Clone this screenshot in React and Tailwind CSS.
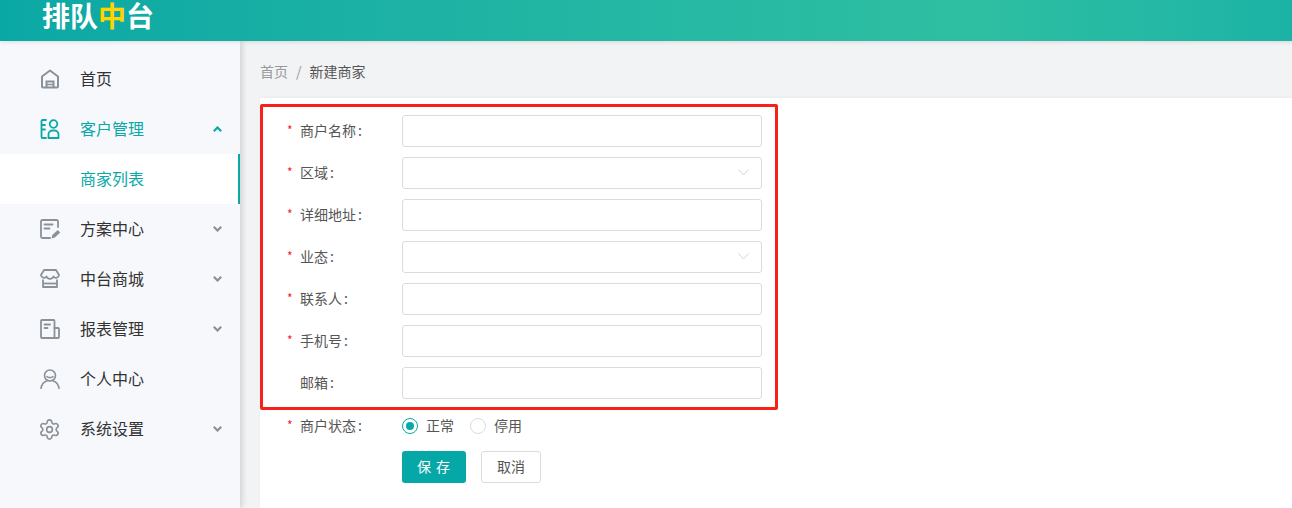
import React from 'react';
import { Settings } from 'lucide-react';

const CJK = { fontFamily: '"Noto Sans CJK SC", "Liberation Sans", sans-serif' };

const HomeIcon = () => (
  <svg width="20" height="20" viewBox="0 0 20 20" fill="none" stroke="#8a9199" strokeWidth="2">
    <path d="M2 7.500 10 1.500l8 6v10a1 1 0 0 1-1 1H3a1 1 0 0 1-1-1z" strokeLinejoin="round" />
    <path d="M6.500 18.500v-6h7v6" />
    <path d="M6.500 15.500h7" strokeWidth="1.500" />
  </svg>
);

const CustomerIcon = () => (
  <svg width="20" height="20" viewBox="0 0 20 20" fill="none" stroke="#0aa9a7" strokeWidth="1.800" strokeLinecap="round">
    <path d="M6 1H2.500a1 1 0 0 0-1 1v16a1 1 0 0 0 1 1H6" />
    <path d="M2 6h3M2 10.500h3" />
    <circle cx="13.500" cy="5" r="3.800" />
    <path d="M8.500 19v-3.500a4 4 0 0 1 4-4h2a4 4 0 0 1 4 4V19z" strokeLinejoin="round" />
  </svg>
);

const PlanIcon = () => (
  <svg width="20" height="20" viewBox="0 0 20 20" fill="none" stroke="#8a9199" strokeWidth="1.800" strokeLinecap="round">
    <path d="M18 8V2.500A1.500 1.500 0 0 0 16.500 1h-14A1.500 1.500 0 0 0 1 2.500v15A1.500 1.500 0 0 0 2.500 19H10" />
    <path d="M4.500 5.500h8M4.500 9.500h5" />
    <path d="m11.500 19.500 .8-3.500 5.500-5 2.500 2.500-5.500 5z" fill="#8a9199" stroke="none" />
  </svg>
);

const ShopIcon = () => (
  <svg width="20" height="20" viewBox="0 0 20 20" fill="none" stroke="#8a9199" strokeWidth="1.800" strokeLinejoin="round">
    <path d="M4 1h12l3 5a3 3 0 0 1-5.500 1.500 3.800 3.800 0 0 1-7 0A3 3 0 0 1 1 6z" />
    <path d="M3 10.500V18h14v-7.500" />
    <path d="M3 14.500h14" />
  </svg>
);

const ReportIcon = () => (
  <svg width="20" height="20" viewBox="0 0 20 20" fill="none" stroke="#8a9199" strokeWidth="1.800" strokeLinecap="round">
    <path d="M14.500 19H2a1 1 0 0 1-1-1V2a1 1 0 0 1 1-1h11.500a1 1 0 0 1 1 1z" />
    <path d="M14.500 9H18a1 1 0 0 1 1 1v8a1 1 0 0 1-1 1h-3.500" />
    <path d="M4.500 5.500h5.500M4.500 9h3" />
  </svg>
);

const UserIcon = () => (
  <svg width="20" height="20" viewBox="0 0 20 20" fill="none" stroke="#8a9199" strokeWidth="1.600" strokeLinecap="round">
    <circle cx="10" cy="6.500" r="5.500" />
    <path d="M7 7.500c1.500 1.500 4.500 1.500 6 0" />
    <path d="M1 19.500c.5-4 3-6.500 5.500-7.500M19 19.500c-.5-4-3-6.500-5.500-7.500" />
  </svg>
);

const GearIcon = () => <Settings size={23} strokeWidth={1.700} className="-ml-[2px] text-[#8a9199]" />;

// small heavy caret beside the submenu rows
const Caret = ({ up, color }) => (
  <svg width="9" height="6" viewBox="0 0 9 6" fill="none" stroke={color} strokeWidth="2.200">
    <path d={up ? 'M.8 5.200 4.500 1.500 8.200 5.200' : 'M.8 .8 4.500 4.500 8.200 .8'} />
  </svg>
);

const MENU = [
  { label: '首页', Icon: HomeIcon },
  { label: '客户管理', Icon: CustomerIcon, open: true, children: ['商家列表'] },
  { label: '方案中心', Icon: PlanIcon, arrow: true },
  { label: '中台商城', Icon: ShopIcon, arrow: true },
  { label: '报表管理', Icon: ReportIcon, arrow: true },
  { label: '个人中心', Icon: UserIcon },
  { label: '系统设置', Icon: GearIcon, arrow: true },
];

const FIELDS = [
  { label: '商户名称', required: true },
  { label: '区域', required: true, select: true },
  { label: '详细地址', required: true },
  { label: '业态', required: true, select: true },
  { label: '联系人', required: true },
  { label: '手机号', required: true },
  { label: '邮箱' },
];

const MenuRow = ({ item }) => (
  <>
    <div className="flex h-[50px] items-center pr-[18px] pl-10">
      <span className="flex w-10 shrink-0"><item.Icon /></span>
      <span className={`flex-1 pb-[2px] text-base ${item.open ? 'text-[#0aa9a7]' : 'text-[#333]'}`}>{item.label}</span>
      {item.open && <Caret up color="#0aa9a7" />}
      {item.arrow && <Caret color="#8a9199" />}
    </div>
    {item.children && item.children.map(c => (
      <div key={c} className="flex h-[50px] items-center border-r-2 border-[#0aa9a7] bg-white pb-[2px] pl-20 text-base text-[#0aa9a7]">{c}</div>
    ))}
  </>
);

const Label = ({ label, required }) => (
  <label className="flex w-[142px] shrink-0 items-center pb-[2px] pl-[27px] text-sm text-[#555]">
    <span className="w-[13px] text-xs text-[#f5222d]">{required ? '*' : ''}</span>
    {label}<span className="ml-[2px]">:</span>
  </label>
);

const App = () => (
  <div className="relative h-[508px] w-[1292px] overflow-hidden bg-[#f2f3f5]" style={CJK}>
    <header className="relative z-10 h-[41px] overflow-hidden bg-gradient-to-r from-[#0aa8a5] via-[#2ebfa2] via-75% to-[#1cb3a6] pt-[3px] pl-[42px] shadow-[0_1px_4px_rgba(0,0,0,0.12)]">
      <div className="font-['Liberation_Sans','Noto_Sans_CJK_SC',sans-serif] text-[28px] leading-[30px] font-bold text-white">
        排队<span className="text-[#ffd400]">中</span>台
      </div>
    </header>
    <div className="flex h-[467px]">
      <aside className="w-[240px] shrink-0 bg-[#f7f8fc] pt-[13px] shadow-[2px_0_6px_rgba(0,0,0,0.15)]">
        {MENU.map(item => <MenuRow key={item.label} item={item} />)}
      </aside>
      <main className="flex-1 pl-5">
        <div className="flex h-[57px] items-center gap-2 pt-[3px] text-sm text-[#999]">
          <span>首页</span>
          <span>/</span>
          <span className="text-[#555]">新建商家</span>
        </div>
        <div className="h-full bg-white pt-[17px] shadow-[0_-1px_2px_rgba(0,0,0,0.04)]">
          <form className="flex flex-col gap-[10px]">
            {FIELDS.map(f => (
              <div key={f.label} className="flex h-8 items-center">
                <Label label={f.label} required={f.required} />
                <div className="relative h-8 w-[360px] rounded-[3px] border border-[#dcdcdc] bg-white">
                  {f.select && (
                    <svg width="11" height="7" viewBox="0 0 11 7" fill="none" stroke="#d4d4d4" className="absolute top-[11px] right-[12px]">
                      <path d="M.5.500 5.500 6l5-5.500" />
                    </svg>
                  )}
                </div>
              </div>
            ))}
            <div className="mt-[1px] flex h-8 items-center">
              <Label label="商户状态" required />
              <span className="flex h-4 w-4 items-center justify-center rounded-full border border-[#0aa9a7]">
                <span className="h-2 w-2 rounded-full bg-[#0aa9a7]" />
              </span>
              <span className="ml-2 pb-[2px] text-sm text-[#555]">正常</span>
              <span className="ml-4 h-4 w-4 rounded-full border border-[#dcdcdc]" />
              <span className="ml-2 pb-[2px] text-sm text-[#555]">停用</span>
            </div>
            <div className="-mt-[1px] flex h-8 items-center pl-[142px]">
              <button type="button" className="h-8 w-16 rounded-[3px] bg-[#06a7a7] pb-[2px] text-sm tracking-[1px] text-white">保 存</button>
              <button type="button" className="ml-[15px] h-8 w-[60px] rounded-[3px] border border-[#dcdcdc] bg-white pb-[2px] text-sm text-[#555]">取消</button>
            </div>
          </form>
        </div>
      </main>
    </div>
    {/* red annotation box drawn over the form */}
    <div className="pointer-events-none absolute top-[104px] left-[260px] h-[306px] w-[518px] rounded-[2px] border-[3px] border-[#f8201a]" />
  </div>
);

export default App;
